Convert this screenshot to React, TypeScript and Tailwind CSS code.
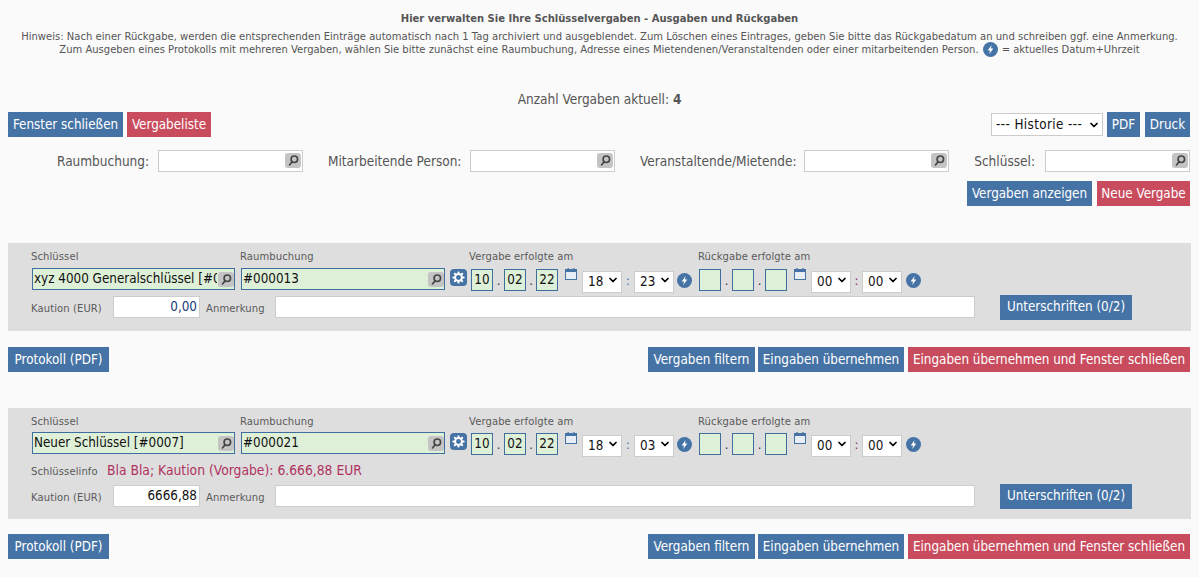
import { ChevronDown } from 'lucide-react';

const BTN_BLUE = 'inline-flex h-[25px] items-center justify-center bg-[#4673a5] text-[13.33px] text-white';
const BTN_RED = 'inline-flex h-[25px] items-center justify-center bg-[#c94c5e] text-[13.33px] text-white';
const SMALL_LABEL = "font-['DejaVu_Sans',sans-serif] text-[10px] tracking-[0.1px] text-[#5a5a5a]";
const hours = ['00', '03', '18', '23'];

function SearchIcon() {
  return (
    <span className="absolute right-0 top-[3px] flex h-[15px] w-[16px] items-center justify-center rounded-[3px] bg-[#c4c4c4]">
      <svg viewBox="0 0 16 16" className="h-[13px] w-[13px]" fill="none" stroke="#444" strokeWidth="2">
        <circle cx="9" cy="6.5" r="4" />
        <path d="M6 10l-3 3.5" strokeLinecap="round" />
      </svg>
    </span>
  );
}

function GearIcon() {
  return (
    <span className="ml-[5px] mt-[1px] flex h-[17px] w-[17px] items-center justify-center rounded-[4px] bg-[#4673a5]">
      <svg viewBox="0 0 16 16" className="h-[13px] w-[13px]">
        <g fill="#fff">
          <circle cx="8" cy="8" r="5.4" />
          <rect x="6.8" y="0.5" width="2.4" height="15" rx="0.6" />
          <rect x="0.5" y="6.8" width="15" height="2.4" rx="0.6" />
          <rect x="6.8" y="0.5" width="2.4" height="15" rx="0.6" transform="rotate(45 8 8)" />
          <rect x="6.8" y="0.5" width="2.4" height="15" rx="0.6" transform="rotate(-45 8 8)" />
        </g>
        <circle cx="8" cy="8" r="3" fill="#4673a5" />
      </svg>
    </span>
  );
}

function CalendarIcon() {
  return (
    <svg viewBox="0 0 12 12" className="h-[12px] w-[12px]">
      <rect x="0.5" y="1.5" width="11" height="10" fill="#e6edf5" stroke="#4673a5" />
      <rect x="0" y="1" width="12" height="3" fill="#4673a5" />
      <rect x="2.5" y="0" width="1.2" height="2" fill="#4673a5" />
      <rect x="8.3" y="0" width="1.2" height="2" fill="#4673a5" />
    </svg>
  );
}

function BoltIcon({ className }: { className: string }) {
  return (
    <svg viewBox="0 0 16 16" className={className}>
      <circle cx="8" cy="8" r="8" fill="#4673a5" />
      <path d="M9.2 3.2L5 9h2.5l-.8 3.8L11 7H8.4z" fill="#fff" />
    </svg>
  );
}

function FilterField({ label, labelWidth, gap }: { label: string; labelWidth: string; gap: string }) {
  return (
    <>
      <span className={`${labelWidth} ${gap} whitespace-nowrap text-right text-[13.5px]`}>{label}</span>
      <span className="relative ml-[10px] block h-[22px] w-[145px] border border-[#ccc] bg-white">
        <span className="absolute right-[1px] top-[-1px] block h-[22px] w-[18px]">
          <SearchIcon />
        </span>
      </span>
    </>
  );
}

function DateBox({ value, className }: { value: string; className: string }) {
  return (
    <span className={`${className} mt-[1px] flex h-[22px] w-[22px] items-center justify-center border border-[#3f6f9f] bg-[#dff0d8] text-[13.33px] text-[#111]`}>
      {value}
    </span>
  );
}

function TimeSelect({ value, className }: { value: string; className: string }) {
  return (
    <span className={`${className} relative mt-[1px] block h-[22px] w-[40px]`}>
      <select
        value={value}
        onChange={() => {}}
        className="h-[22px] w-[40px] appearance-none border border-[#ccc] bg-white pl-[5px] text-[13.33px] text-[#111] outline-none"
      >
        {hours.map((h) => (
          <option key={h} value={h}>
            {h}
          </option>
        ))}
      </select>
      <ChevronDown className="pointer-events-none absolute right-[3px] top-[5px] h-[12px] w-[12px] text-black" strokeWidth={3.5} />
    </span>
  );
}

function TextBox({ value, width }: { value: string; width: string }) {
  return (
    <span className={`${width} relative block h-[22px] shrink-0 overflow-hidden whitespace-nowrap border border-[#3f6f9f] bg-[#dff0d8] pl-[1px] text-[13.33px] leading-[20px] text-[#111]`}>
      <span className="block w-[calc(100%-17px)] overflow-hidden">{value}</span>
      <SearchIcon />
    </span>
  );
}

function Separator({ width, char, color }: { width: string; char: string; color: string }) {
  return <span className={`${width} ${color} mt-[1px] h-[22px] text-center text-[13px] leading-[24px]`}>{char}</span>;
}

function Panel({
  keyName,
  booking,
  minute,
  deposit,
  depositClass,
  info,
}: {
  keyName: string;
  booking: string;
  minute: string;
  deposit: string;
  depositClass: string;
  info?: boolean;
}) {
  return (
    <section className={`${info ? 'pb-[12px]' : 'pb-[13px]'} mx-[8px] bg-[#dedede] pl-[23px] pt-[8px]`}>
      <div className={`${SMALL_LABEL} flex h-[11px] items-center`}>
        <span className="w-[209px]">Schlüssel</span>
        <span className="w-[229px]">Raumbuchung</span>
        <span className="w-[229px]">Vergabe erfolgte am</span>
        <span>Rückgabe erfolgte am</span>
      </div>
      <div className={`${info ? 'mt-[5px]' : 'mt-[6px]'} flex h-[23px] items-start pl-[1px]`}>
        <TextBox value={keyName} width="w-[203px]" />
        <span className="ml-[6px] block">
          <TextBox value={booking} width="w-[204px]" />
        </span>
        <GearIcon />
        <DateBox value="10" className="ml-[4px]" />
        <Separator width="w-[11px]" char="." color="text-[#333]" />
        <DateBox value="02" className="" />
        <Separator width="w-[10px]" char="." color="text-[#333]" />
        <DateBox value="22" className="" />
        <span className="ml-[7px] flex">
          <CalendarIcon />
        </span>
        <TimeSelect value="18" className="ml-[5px]" />
        <Separator width="w-[12px]" char=":" color="text-[#3f6f9f]" />
        <TimeSelect value={minute} className="" />
        <BoltIcon className="ml-[3px] mt-[5px] h-[15px] w-[15px]" />
        <DateBox value="" className="ml-[7px]" />
        <Separator width="w-[11px]" char="." color="text-[#333]" />
        <DateBox value="" className="" />
        <Separator width="w-[11px]" char="." color="text-[#333]" />
        <DateBox value="" className="" />
        <span className="ml-[7px] flex">
          <CalendarIcon />
        </span>
        <TimeSelect value="00" className="ml-[5px]" />
        <Separator width="w-[11px]" char=":" color="text-[#8a2a5a]" />
        <TimeSelect value="00" className="" />
        <BoltIcon className="ml-[4px] mt-[5px] h-[15px] w-[15px]" />
      </div>
      {info && (
        <div className="mt-[7px] flex h-[16px] items-center">
          <span className={`${SMALL_LABEL} w-[76px] pt-[2px]`}>Schlüsselinfo</span>
          <span className="text-[13.75px] text-[#b0325f]">Bla Bla; Kaution (Vorgabe): 6.666,88 EUR</span>
        </div>
      )}
      <div className={`${info ? 'mt-[7px]' : 'mt-[5px]'} flex h-[22px] items-center`}>
        <span className={`${SMALL_LABEL} w-[82px] pt-[2px]`}>Kaution (EUR)</span>
        <span className={`${depositClass} h-[22px] w-[87px] border border-[#ccc] bg-white pr-[2px] text-right text-[13.33px] leading-[20px]`}>
          {deposit}
        </span>
        <span className={`${SMALL_LABEL} ml-[6px] w-[69px] pt-[2px]`}>Anmerkung</span>
        <span className="block h-[22px] w-[700px] border border-[#ccc] bg-white" />
        <button className={`${BTN_BLUE} ml-[25px] w-[132px]`}>Unterschriften (0/2)</button>
      </div>
    </section>
  );
}

function ActionRow({ className }: { className: string }) {
  return (
    <div className={`${className} mx-[8px] flex items-center`}>
      <button className={`${BTN_BLUE} w-[101px]`}>Protokoll (PDF)</button>
      <button className={`${BTN_BLUE} ml-auto w-[107px]`}>Vergaben filtern</button>
      <button className={`${BTN_BLUE} ml-[3px] w-[146px]`}>Eingaben übernehmen</button>
      <button className={`${BTN_RED} ml-[4px] mr-[1px] w-[282px]`}>Eingaben übernehmen und Fenster schließen</button>
    </div>
  );
}

export default function App() {
  return (
    <div className="h-[577px] w-[1199px] overflow-hidden bg-[#fafafa] font-['DejaVu_Sans_Condensed','DejaVu_Sans',sans-serif] text-[#555]">
      <header className="pt-[12px] text-center font-['DejaVu_Sans',sans-serif] text-[10px] leading-[13px]">
        <p className="font-bold">Hier verwalten Sie Ihre Schlüsselvergaben - Ausgaben und Rückgaben</p>
        <p className="mt-[5px] tracking-[0.02px]">
          Hinweis: Nach einer Rückgabe, werden die entsprechenden Einträge automatisch nach 1 Tag archiviert und ausgeblendet. Zum Löschen eines Eintrages, geben Sie bitte das Rückgabedatum an und schreiben ggf. eine Anmerkung.
        </p>
        <p className="mt-[-1px] flex items-center justify-center">
          Zum Ausgeben eines Protokolls mit mehreren Vergaben, wählen Sie bitte zunächst eine Raumbuchung, Adresse eines Mietendenen/Veranstaltenden oder einer mitarbeitenden Person.
          <BoltIcon className="mx-[4px] h-[15px] w-[15px]" />= aktuelles Datum+Uhrzeit
        </p>
      </header>

      <p className="mt-[34px] text-center text-[13.5px] leading-[17px]">
        Anzahl Vergaben aktuell: <b>4</b>
      </p>

      <div className="mx-[8px] mt-[4px] flex h-[25px] items-center">
        <button className={`${BTN_BLUE} w-[115px]`}>Fenster schließen</button>
        <button className={`${BTN_RED} ml-[4px] w-[84px]`}>Vergabeliste</button>
        <span className="relative ml-auto block h-[23px] w-[112px] border border-[#ccc] bg-white pl-[4px] text-[13.33px] leading-[21px] tracking-[0.4px] text-[#111]">
          --- Historie ---
          <ChevronDown className="absolute right-[2px] top-[5px] h-[12px] w-[12px] text-black" strokeWidth={3.5} />
        </span>
        <button className={`${BTN_BLUE} ml-[4px] w-[33px]`}>PDF</button>
        <button className={`${BTN_BLUE} ml-[5px] mr-[1px] w-[45px]`}>Druck</button>
      </div>

      <div className="mt-[13px] flex h-[22px] items-center">
        <FilterField label="Raumbuchung:" labelWidth="w-[91px]" gap="ml-[57px]" />
        <FilterField label="Mitarbeitende Person:" labelWidth="w-[132px]" gap="ml-[25px]" />
        <FilterField label="Veranstaltende/Mietende:" labelWidth="w-[154px]" gap="ml-[25px]" />
        <FilterField label="Schlüssel:" labelWidth="w-[61px]" gap="ml-[25px]" />
      </div>

      <div className="mx-[8px] mt-[9px] flex justify-end pr-[1px]">
        <button className={`${BTN_BLUE} w-[125px]`}>Vergaben anzeigen</button>
        <button className={`${BTN_RED} ml-[5px] w-[93px]`}>Neue Vergabe</button>
      </div>

      <div className="mt-[37px]">
        <Panel keyName="xyz 4000 Generalschlüssel [#0007]" booking="#000013" minute="23" deposit="0,00" depositClass="text-[#123a7a]" />
      </div>
      <ActionRow className="mt-[16px]" />
      <div className="mt-[36px]">
        <Panel keyName="Neuer Schlüssel [#0007]" booking="#000021" minute="03" deposit="6666,88" depositClass="text-[#111]" info />
      </div>
      <ActionRow className="mt-[15px]" />
    </div>
  );
}
